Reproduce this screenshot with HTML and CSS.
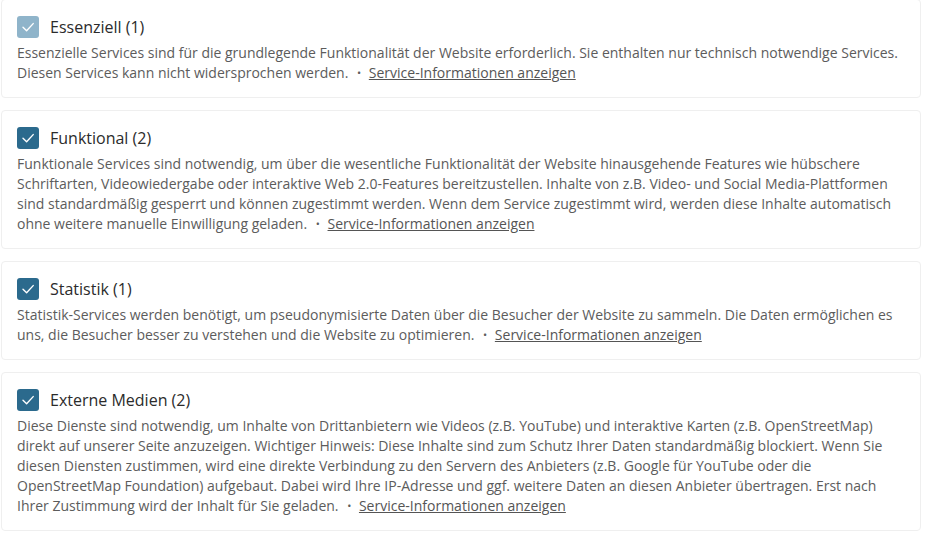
FILE: index.html
```html
<!DOCTYPE html>
<html lang="de">
<head>
    <meta charset="UTF-8">
    <meta name="viewport" content="width=device-width, initial-scale=1.0">
    <title>Datenschutz-Einstellungen</title>
    <link rel="stylesheet" href="styles.css">
</head>
<body>
    <div class="groups">
        <div class="group">
            <label class="group-head">
                <span class="check check-disabled">
                    <svg viewBox="0 0 22 22" width="22" height="22"><path d="M6 11.2 L9.6 14.8 L16.2 7.6" /></svg>
                </span>
                <span class="group-title">Essenziell (1)</span>
            </label>
            <p class="group-desc">Essenzielle Services sind für die grundlegende Funktionalität der Website erforderlich. Sie enthalten nur technisch notwendige Services. Diesen Services kann nicht widersprochen werden. <span class="sep">•</span> <a href="#" class="more">Service-Informationen anzeigen</a></p>
        </div>
        <div class="group">
            <label class="group-head">
                <span class="check">
                    <svg viewBox="0 0 22 22" width="22" height="22"><path d="M6 11.2 L9.6 14.8 L16.2 7.6" /></svg>
                </span>
                <span class="group-title">Funktional (2)</span>
            </label>
            <p class="group-desc">Funktionale Services sind notwendig, um über die wesentliche Funktionalität der Website hinausgehende Features wie hübschere Schriftarten, Videowiedergabe oder interaktive Web 2.0-Features bereitzustellen. Inhalte von z.B. Video- und Social Media-Plattformen sind standardmäßig gesperrt und können zugestimmt werden. Wenn dem Service zugestimmt wird, werden diese Inhalte automatisch ohne weitere manuelle Einwilligung geladen. <span class="sep">•</span> <a href="#" class="more">Service-Informationen anzeigen</a></p>
        </div>
        <div class="group">
            <label class="group-head">
                <span class="check">
                    <svg viewBox="0 0 22 22" width="22" height="22"><path d="M6 11.2 L9.6 14.8 L16.2 7.6" /></svg>
                </span>
                <span class="group-title">Statistik (1)</span>
            </label>
            <p class="group-desc">Statistik-Services werden benötigt, um pseudonymisierte Daten über die Besucher der Website zu sammeln. Die Daten ermöglichen es uns, die Besucher besser zu verstehen und die Website zu optimieren. <span class="sep">•</span> <a href="#" class="more">Service-Informationen anzeigen</a></p>
        </div>
        <div class="group">
            <label class="group-head">
                <span class="check">
                    <svg viewBox="0 0 22 22" width="22" height="22"><path d="M6 11.2 L9.6 14.8 L16.2 7.6" /></svg>
                </span>
                <span class="group-title">Externe Medien (2)</span>
            </label>
            <p class="group-desc">Diese Dienste sind notwendig, um Inhalte von Drittanbietern wie Videos (z.B. YouTube) und interaktive Karten (z.B. OpenStreetMap) direkt auf unserer Seite anzuzeigen. Wichtiger Hinweis: Diese Inhalte sind zum Schutz Ihrer Daten standardmäßig blockiert. Wenn Sie diesen Diensten zustimmen, wird eine direkte Verbindung zu den Servern des Anbieters (z.B. Google für YouTube oder die OpenStreetMap Foundation) aufgebaut. Dabei wird Ihre IP-Adresse und ggf. weitere Daten an diesen Anbieter übertragen. Erst nach Ihrer Zustimmung wird der Inhalt für Sie geladen. <span class="sep">•</span> <a href="#" class="more">Service-Informationen anzeigen</a></p>
        </div>
    </div>
</body>
</html>
```

FILE: styles.css
```css
body {
    font-family: "Open Sans", "Liberation Sans", sans-serif;
    margin: 0;
    background-color: #fff;
    color: #333;
    overflow: hidden;
}
.groups {
    width: 920px;
    margin: -1px 0 0 1px;
    display: flex;
    flex-direction: column;
    gap: 12px;
}
.group {
    border: 1px solid #efefef;
    border-radius: 4px;
    padding: 16px 15px 14px;
    background: #fff;
}
.group-head {
    display: flex;
    align-items: center;
    gap: 11px;
    height: 22px;
    cursor: pointer;
}
.check {
    width: 22px;
    height: 22px;
    border-radius: 3px;
    background-color: #2b6a8d;
    flex: none;
}
.check svg {
    display: block;
    fill: none;
    stroke: #fff;
    stroke-width: 1.4;
    stroke-linecap: round;
    stroke-linejoin: round;
}
.check-disabled {
    background-color: #8fb4ca;
}
.group-title {
    font-size: 16px;
    color: #2b2b2b;
}
.group-desc {
    margin: 5px 0 0;
    font-size: 14px;
    line-height: 20px;
    color: #5c5c5c;
}
.sep {
    display: inline-block;
    font-size: 11px;
    margin: 0 4px 0 5px;
    vertical-align: 1px;
}
.more {
    color: #555;
    text-decoration: underline;
}
```
